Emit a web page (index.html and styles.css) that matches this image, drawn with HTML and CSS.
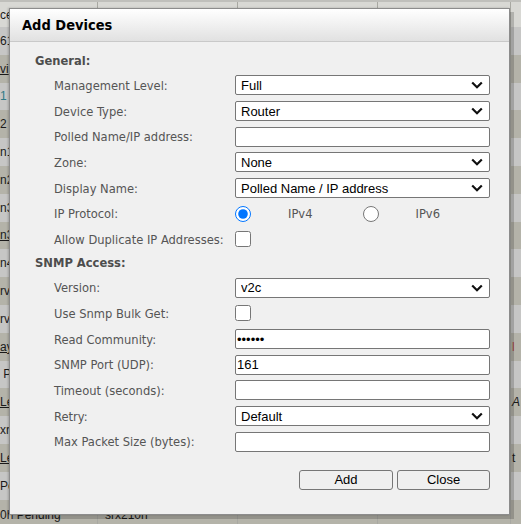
FILE: index.html
```html
<!DOCTYPE html>
<html lang="en">
<head>
  <meta charset="UTF-8" />
  <meta name="viewport" content="width=device-width, initial-scale=1" />
  <title>Add Devices</title>
  <link rel="stylesheet" href="styles.css">
</head>
<body>
  <table class="devices">
    <thead>
      <tr><th>ce</th><th></th><th></th><th></th><th></th></tr>
    </thead>
    <tbody>
      <tr><td>61</td><td></td><td></td><td></td><td></td></tr>
      <tr><td><a href="#">vi</a></td><td></td><td></td><td></td><td></td></tr>
      <tr><td><span class="ip">1</span> <span class="mark">I</span></td><td></td><td></td><td></td><td></td></tr>
      <tr><td>2 <span class="mark">I</span></td><td></td><td></td><td></td><td></td></tr>
      <tr><td>n1</td><td></td><td></td><td></td><td></td></tr>
      <tr><td>n2</td><td></td><td></td><td></td><td></td></tr>
      <tr><td>n3</td><td></td><td></td><td></td><td></td></tr>
      <tr><td><a href="#">n3</a></td><td></td><td></td><td></td><td></td></tr>
      <tr><td>n4</td><td></td><td></td><td></td><td></td></tr>
      <tr><td>rv</td><td></td><td></td><td></td><td></td></tr>
      <tr><td>rv</td><td></td><td></td><td></td><td></td></tr>
      <tr><td><a href="#">ay</a></td><td></td><td></td><td></td><td><span class="mark">l</span></td></tr>
      <tr><td>&nbsp;P</td><td></td><td></td><td></td><td></td></tr>
      <tr><td><a href="#">Le</a></td><td></td><td></td><td></td><td><i>A</i></td></tr>
      <tr><td>xr</td><td></td><td></td><td></td><td></td></tr>
      <tr><td><a href="#">Le</a></td><td></td><td></td><td></td><td>t</td></tr>
      <tr><td>Pe</td><td></td><td></td><td></td><td></td></tr>
      <tr><td>0h Pending</td><td>srx210h</td><td></td><td></td><td></td></tr>
    </tbody>
  </table>

  <div class="dialog">
    <div class="dialog-title">Add Devices</div>
    <form class="dialog-body" id="addDevices">
      <div class="section">General:</div>
      <div class="row">
        <label>Management Level:</label>
        <select name="level"><option>Full</option><option>Partial</option></select>
      </div>
      <div class="row">
        <label>Device Type:</label>
        <select name="type"><option>Router</option><option>Switch</option></select>
      </div>
      <div class="row">
        <label>Polled Name/IP address:</label>
        <input type="text" name="address" />
      </div>
      <div class="row">
        <label>Zone:</label>
        <select name="zone"><option>None</option></select>
      </div>
      <div class="row">
        <label>Display Name:</label>
        <select name="display"><option>Polled Name / IP address</option></select>
      </div>
      <div class="row">
        <label>IP Protocol:</label>
        <div class="radios">
          <span class="opt"><input type="radio" name="proto" value="4" checked /><span>IPv4</span></span>
          <span class="opt"><input type="radio" name="proto" value="6" /><span>IPv6</span></span>
        </div>
      </div>
      <div class="row">
        <label>Allow Duplicate IP Addresses:</label>
        <div><input type="checkbox" name="dup" /></div>
      </div>

      <div class="section">SNMP Access:</div>
      <div class="row">
        <label>Version:</label>
        <select name="version"><option>v2c</option><option>v1</option><option>v3</option></select>
      </div>
      <div class="row">
        <label>Use Snmp Bulk Get:</label>
        <div><input type="checkbox" name="bulk" /></div>
      </div>
      <div class="row">
        <label>Read Community:</label>
        <input type="password" name="community" value="public" />
      </div>
      <div class="row">
        <label>SNMP Port (UDP):</label>
        <input type="text" name="port" value="161" />
      </div>
      <div class="row">
        <label>Timeout (seconds):</label>
        <input type="text" name="timeout" />
      </div>
      <div class="row">
        <label>Retry:</label>
        <select name="retry"><option>Default</option></select>
      </div>
      <div class="row">
        <label>Max Packet Size (bytes):</label>
        <input type="text" name="packet" />
      </div>

      <div class="buttons">
        <button type="submit" class="add-btn">Add</button>
        <button type="button" class="close-btn">Close</button>
      </div>
    </form>
  </div>
</body>
</html>
```

FILE: styles.css
```css
html, body {
  margin: 0;
  height: 100%;
  overflow: hidden;
}
body {
  background-color: #bdbdb8;
  font-family: "Liberation Sans", Arial, sans-serif;
  font-size: 12px;
}

/* background table, dimmed by the modal */
.devices {
  border-collapse: collapse;
  table-layout: fixed;
  width: 521px;
}
.devices th,
.devices td {
  padding: 0;
  text-align: left;
  vertical-align: middle;
  white-space: nowrap;
  overflow: hidden;
  border-right: 1px solid #a8a8a2;
  color: #1a1a1a;
  font-weight: normal;
}
.devices th:nth-child(1), .devices td:nth-child(1) { width: 97px; }
.devices th:nth-child(2), .devices td:nth-child(2) { width: 132px; padding-left: 7px; }
.devices th:nth-child(3), .devices td:nth-child(3) { width: 139px; }
.devices th:nth-child(4), .devices td:nth-child(4) { width: 132px; }
.devices th:nth-child(5), .devices td:nth-child(5) { padding-left: 1px; border-right: none; }
.devices thead tr {
  height: 26px;
  background-color: #d8d8d4;
  border-top: 2px solid #bfbfbb;
}
.devices tbody tr {
  height: 27.8px;
}
.devices tbody tr:nth-child(odd) {
  background-color: #c6c6c5;
}
.devices tbody tr:nth-child(even) {
  background-color: #b4b3a9;
}
.devices tbody tr:last-child td {
  padding-top: 4px;
}
.devices a {
  color: #1a1a1a;
}
.devices .ip {
  color: #2f7a86;
}
.devices .mark {
  color: #b0504a;
}

/* modal */
.dialog {
  position: absolute;
  left: 9px;
  top: 8px;
  width: 501px;
  height: 507px;
  box-sizing: border-box;
  border: 1px solid #8c8c8c;
  background-color: #f0f0f0;
  box-shadow: 4px 4px 0 rgba(0,0,0,0.18), -1px 0 2px rgba(0,0,0,0.2);
}
.dialog-title {
  height: 32px;
  line-height: 32px;
  padding-left: 12px;
  border-bottom: 1px solid #c9c9c9;
  background: linear-gradient(#ffffff, #e1e1e1);
  font-family: "DejaVu Sans Condensed", "DejaVu Sans", sans-serif;
  font-size: 14.5px;
  font-weight: bold;
  color: #000;
}
.dialog-body {
  padding: 8px 19px 0 25px;
  font-family: "DejaVu Sans Condensed", "DejaVu Sans", sans-serif;
  font-size: 12.8px;
  color: #555;
}
.section {
  height: 22.5px;
  line-height: 22.5px;
  font-weight: bold;
  color: #4d4d4d;
}
.row {
  display: grid;
  grid-template-columns: 181px 255px;
  align-items: center;
  height: 25.7px;
  padding-left: 19px;
}
.row select,
.row input[type="text"],
.row input[type="password"] {
  width: 255px;
  height: 20px;
  box-sizing: border-box;
  margin: 0;
  border: 1px solid #767676;
  border-radius: 2px;
  background-color: #fff;
  font-family: "Liberation Sans", Arial, sans-serif;
  font-size: 13px;
  color: #000;
}
.row input[type="text"],
.row input[type="password"] {
  padding: 1px 1px;
}
.row select {
  appearance: none;
  -webkit-appearance: none;
  padding: 0 20px 0 5px;
  background-image: url("data:image/svg+xml,%3Csvg xmlns='http://www.w3.org/2000/svg' width='12' height='8' viewBox='0 0 12 8'%3E%3Cpath d='M1.2 1.5 L6 6.2 L10.8 1.5' fill='none' stroke='%23111' stroke-width='2.2'/%3E%3C/svg%3E");
  background-repeat: no-repeat;
  background-position: right 6px center;
  background-size: 12px 8px;
}
.row input[type="checkbox"],
.row input[type="radio"] {
  width: 16px;
  height: 16px;
  margin: 0;
  display: block;
}
.radios {
  display: flex;
  align-items: center;
}
.opt {
  display: flex;
  align-items: center;
  width: 129px;
}
.opt span {
  margin-left: 37px;
}
.buttons {
  display: flex;
  justify-content: flex-end;
  gap: 4px;
  margin-top: 15px;
}
.buttons button {
  height: 20px;
  padding: 0;
  border: 1px solid #767676;
  border-radius: 3px;
  background-color: #efefef;
  font-family: "Liberation Sans", Arial, sans-serif;
  font-size: 13px;
  color: #000;
}
.add-btn {
  width: 94px;
}
.close-btn {
  width: 93px;
}
```
